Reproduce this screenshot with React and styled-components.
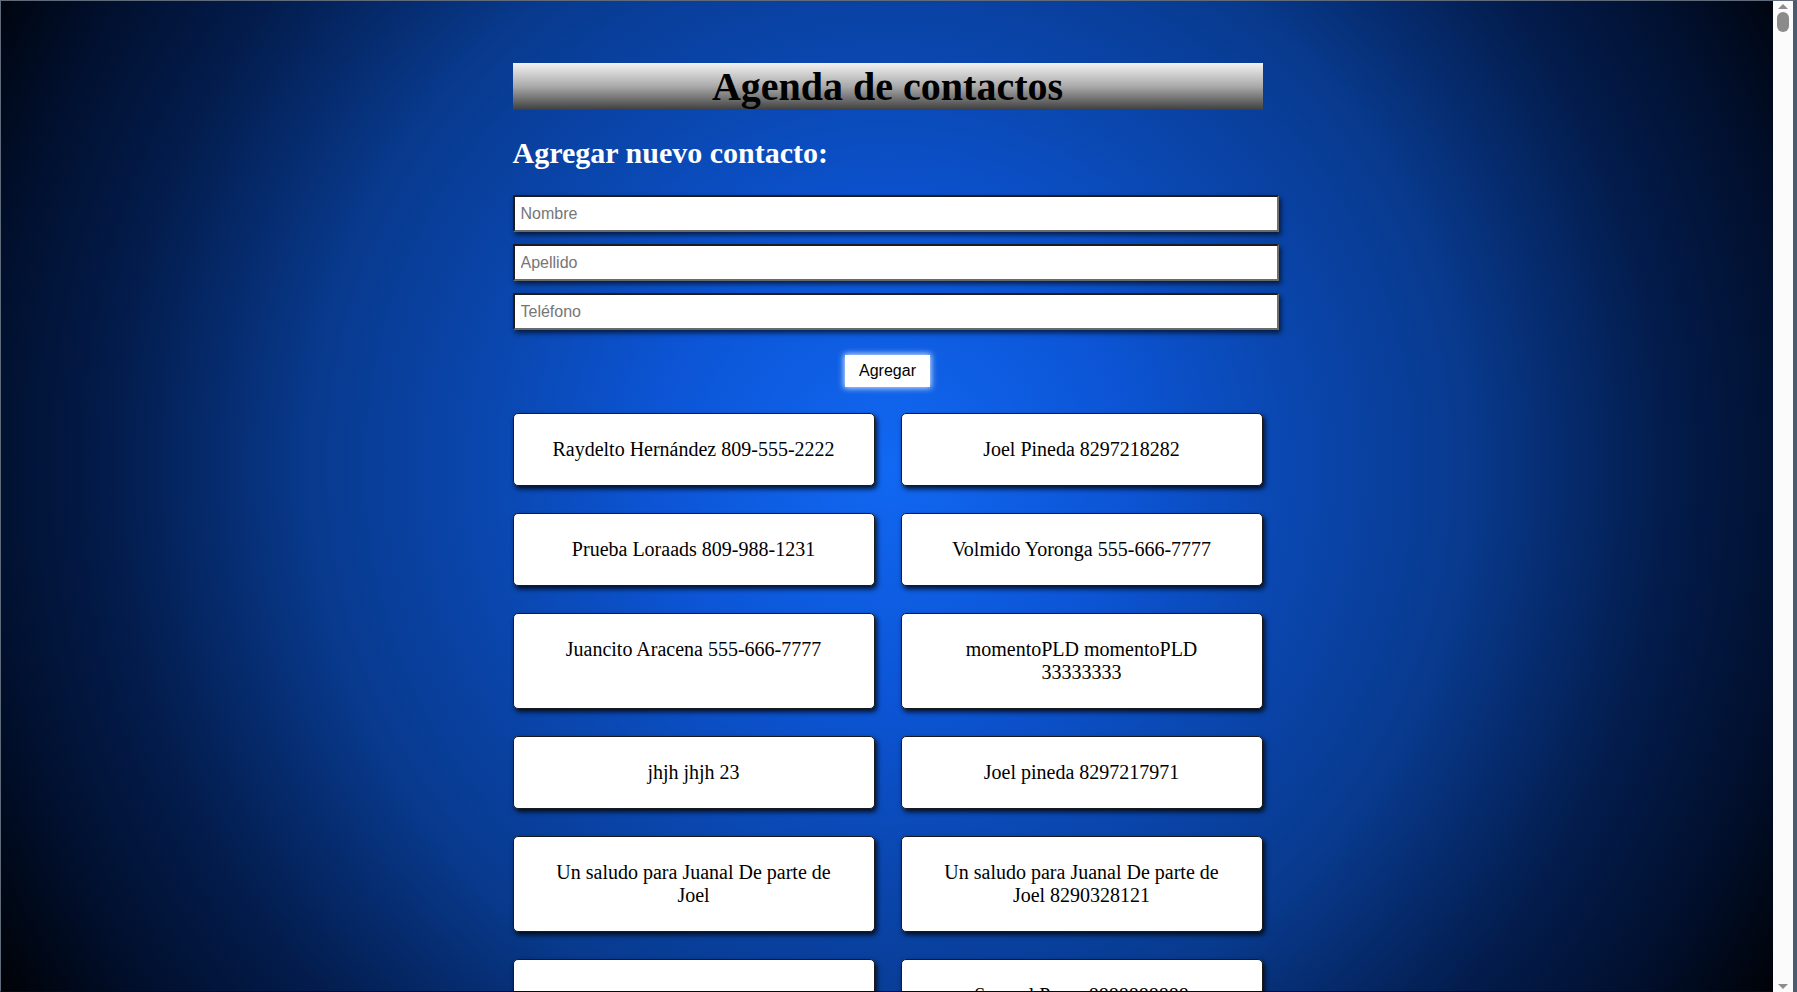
import React from "react";
import styled, { createGlobalStyle } from "styled-components";

const Global = createGlobalStyle`
  html, body { margin: 0; padding: 0; }
  body {
    min-height: 100vh;
    padding: 0 24px 0 2px;
    font-family: "Liberation Serif", "Times New Roman", serif;
    background: radial-gradient(circle farthest-corner at 49.5% 47%,
      #1168f2 0%, #0c55d6 22%, #0a47b0 38%, #083a8e 55%, #031c4c 74%, #010f2c 87%, #000 100%) fixed;
  }
`;

const Frame = styled.div`
  position: fixed;
  inset: 0;
  pointer-events: none;
  border-top: 1px solid #5f6b7a;
  border-left: 1px solid #5f6b7a;
  border-bottom: 1px solid #0a0a0a;
  z-index: 5;
`;

const ScrollTrack = styled.div`
  position: fixed;
  top: 0;
  right: 0;
  bottom: 0;
  width: 20px;
  background: #fbfbfb;
  border-right: 4px solid #4b5a70;
  border-top: 1px solid #5f6b7a;
  z-index: 6;
  display: flex;
  flex-direction: column;
  align-items: center;
  justify-content: space-between;
  padding: 3px 0;
  box-sizing: content-box;
`;

const Arrow = styled.div`
  width: 0;
  height: 0;
  border-left: 5px solid transparent;
  border-right: 5px solid transparent;
  ${(p) => (p.$dir === "up" ? "border-bottom: 5px solid #8d8d8d;" : "border-top: 5px solid #8d8d8d;")}
`;

const Thumb = styled.div`
  width: 12px;
  height: 20px;
  border-radius: 6px;
  background: #8b8b8b;
  margin-top: 3px;
`;

const TrackTop = styled.div`
  display: flex;
  flex-direction: column;
  align-items: center;
`;

const Page = styled.main`
  width: 750px;
  margin: 0 auto;
  padding: 63px 0 60px;
  display: flex;
  flex-direction: column;
  gap: 25px;
`;

const TitleBar = styled.h1`
  margin: 0;
  height: 47px;
  line-height: 47px;
  font-size: 40px;
  font-weight: bold;
  text-align: center;
  color: #000;
  background: linear-gradient(to bottom, #f2f2f2 0%, #a9a9a9 50%, #3e3e3e 100%);
`;

const SectionTitle = styled.h2`
  margin: 1px 0 0;
  font-size: 30px;
  line-height: 34px;
  font-weight: bold;
  color: #fff;
`;

const Form = styled.form`
  display: flex;
  flex-direction: column;
  gap: 12px;
  align-items: flex-start;
`;

const Field = styled.input`
  box-sizing: border-box;
  width: calc(100% + 16px);
  height: 37px;
  padding: 0 6px;
  font-family: "Liberation Sans", Arial, sans-serif;
  font-size: 16px;
  color: #000;
  background: #fff;
  border-style: solid;
  border-width: 2px;
  border-color: #1c1c1c #6e6e6e #6a6a6a #1c1c1c;
  box-shadow: 2px 3px 5px rgba(0, 0, 0, 0.65);
  outline: none;
  &::placeholder { color: #767676; }
`;

const ButtonRow = styled.div`
  display: flex;
  justify-content: center;
`;

const AddButton = styled.button`
  font-family: "Liberation Sans", Arial, sans-serif;
  font-size: 16px;
  line-height: 18px;
  padding: 7px 14px;
  border: none;
  background: #fff;
  color: #000;
  box-shadow: 0 0 6px 1px rgba(255, 255, 255, 0.85);
  cursor: pointer;
`;

const Grid = styled.section`
  margin-top: 1px;
  display: grid;
  grid-template-columns: 1fr 1fr;
  column-gap: 26px;
  row-gap: 27px;
`;

const Card = styled.div`
  background: #fff;
  border: 1px solid #1a1a1a;
  border-radius: 5px;
  padding: 24px 26px;
  min-height: 23px;
  text-align: center;
  font-size: 20px;
  line-height: 23px;
  color: #000;
  box-shadow: 2px 3px 5px rgba(0, 0, 0, 0.8);
`;

const contacts = [
  "Raydelto Hernández 809-555-2222",
  "Joel Pineda 8297218282",
  "Prueba Loraads 809-988-1231",
  "Volmido Yoronga 555-666-7777",
  "Juancito Aracena 555-666-7777",
  "momentoPLD momentoPLD 33333333",
  "jhjh jhjh 23",
  "Joel pineda 8297217971",
  "Un saludo para Juanal De parte de Joel",
  "Un saludo para Juanal De parte de Joel 8290328121",
  "",
  "Samuel Perez 8888888888",
  "Maria Lopez 809-123-4567",
  "Pedro Martinez 829-555-1234",
];

export default function App() {
  return (
    <>
      <Global />
      <Frame />
      <ScrollTrack>
        <TrackTop>
          <Arrow $dir="up" />
          <Thumb />
        </TrackTop>
        <Arrow $dir="down" />
      </ScrollTrack>
      <Page>
        <TitleBar>Agenda de contactos</TitleBar>
        <SectionTitle>Agregar nuevo contacto:</SectionTitle>
        <Form onSubmit={(e) => e.preventDefault()}>
          <Field placeholder="Nombre" />
          <Field placeholder="Apellido" />
          <Field placeholder="Teléfono" />
        </Form>
        <ButtonRow>
          <AddButton type="button">Agregar</AddButton>
        </ButtonRow>
        <Grid>
          {contacts.map((c, i) => (
            <Card key={i}>{c}</Card>
          ))}
        </Grid>
      </Page>
    </>
  );
}
